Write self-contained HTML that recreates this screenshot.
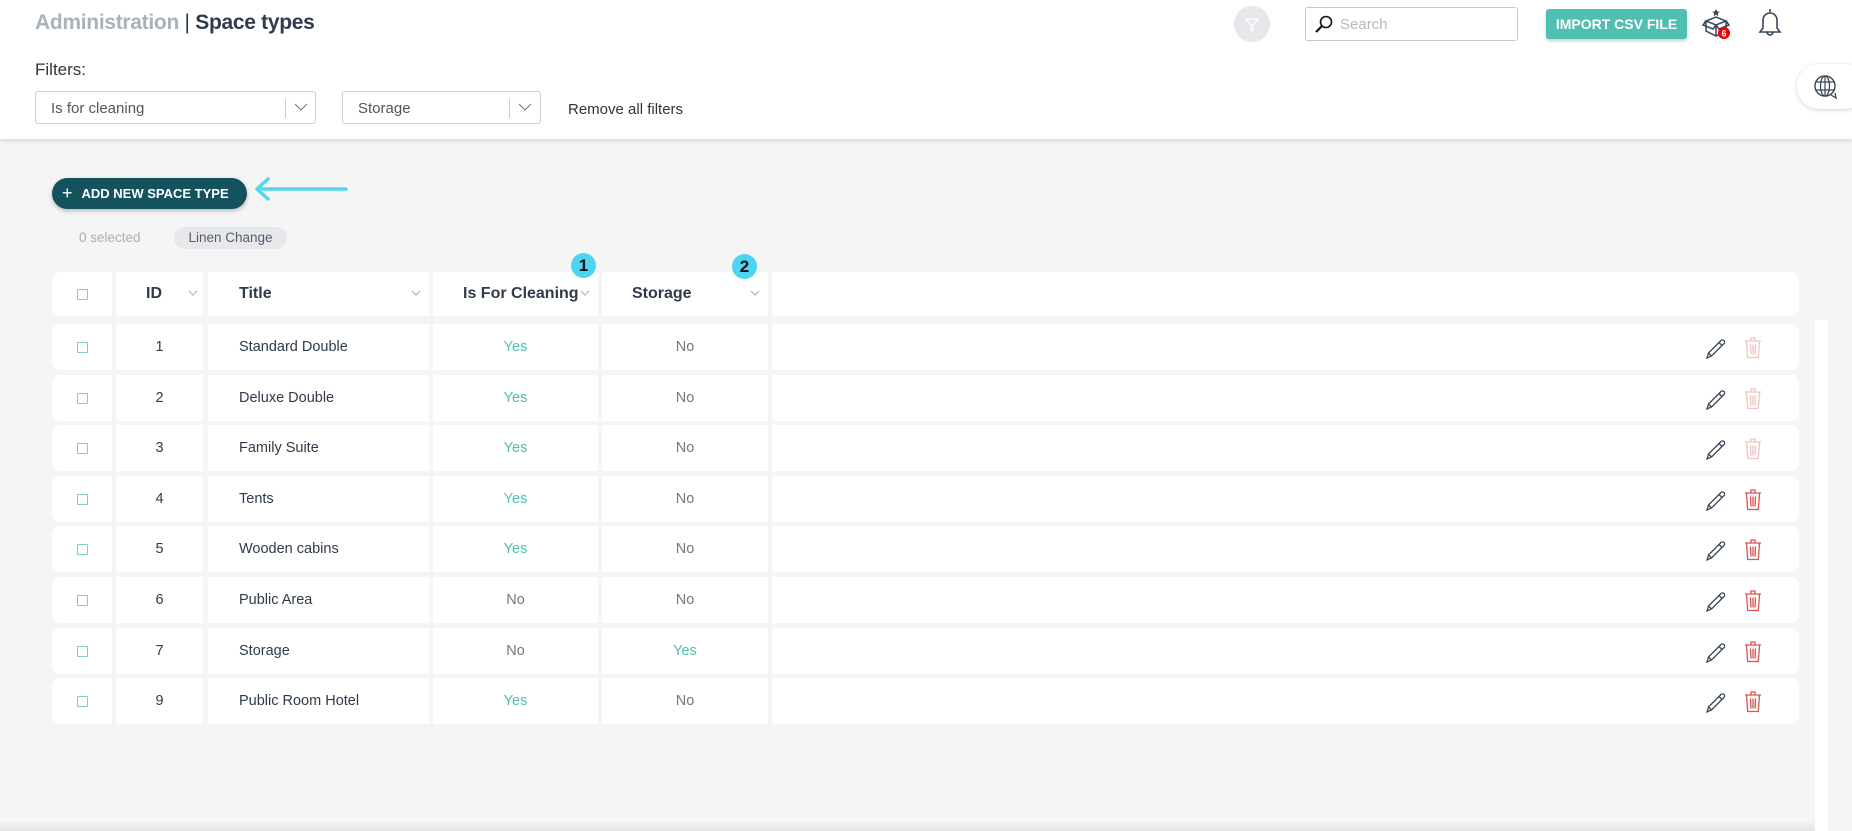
<!DOCTYPE html>
<html><head><meta charset="utf-8"><style>
*{box-sizing:border-box;margin:0;padding:0}
body{width:1852px;height:831px;overflow:hidden;background:#f5f5f5;font-family:"Liberation Sans",sans-serif;color:#2f3b4a;position:relative}
.abs{position:absolute}
.top{position:absolute;left:0;top:0;width:1852px;height:139px;background:#fff;box-shadow:0 2px 4px rgba(0,0,0,.12)}
.sel{position:absolute;height:33px;border:1px solid #cfcfcf;border-radius:3px;background:#fff;font-size:15px;color:#555;padding:8px 15px}
.sel .sep{position:absolute;top:7px;width:1px;height:19px;background:#ccc}
.sel svg{position:absolute;top:10px}
.cell{position:absolute;background:#fff;display:flex;align-items:center;justify-content:center;font-size:14.5px}
.cb{width:11px;height:11px;border:1.5px solid #7fcdc4;border-radius:1px}
.hd{font-weight:bold;font-size:16px;color:#2f3b4a}
.yes{color:#4fbfb0}.no{color:#777}
.chev{position:absolute;top:18px}
</style></head><body>
<div class="top"></div>
<div class="abs" style="left:35px;top:11px;font-size:21px;font-weight:bold;letter-spacing:-0.3px"><span style="color:#a9b1ba">Administration</span> <span style="font-weight:normal">|</span> <span style="color:#2f3b4a">Space types</span></div>
<div class="abs" style="left:35px;top:60px;font-size:17px;color:#333">Filters:</div>
<div class="sel" style="left:35px;top:91px;width:281px">Is for cleaning<div class="sep" style="left:249px"></div><svg style="left:258px" width="14" height="10"><path d="M1 2l6 6 6-6" stroke="#777" fill="none"/></svg></div>
<div class="sel" style="left:342px;top:91px;width:199px">Storage<div class="sep" style="left:166px"></div><svg style="left:175px" width="14" height="10"><path d="M1 2l6 6 6-6" stroke="#777" fill="none"/></svg></div>
<div class="abs" style="left:568px;top:101px;font-size:15px;color:#333">Remove all filters</div>
<div class="abs" style="left:1234px;top:6px;width:36px;height:36px;border-radius:50%;background:#e6e7ea"><svg width="36" height="36"><path d="M12 13h12l-5 6v6l-2-1v-5z" stroke="#fff" stroke-width="1.3" fill="none"/></svg></div>
<div class="abs" style="left:1305px;top:7px;width:213px;height:34px;border:1px solid #c8c8c8;border-radius:3px;background:#fff"><svg class="abs" style="left:8px;top:6px" width="20" height="20"><circle cx="12" cy="8" r="5.5" stroke="#111" stroke-width="1.6" fill="none"/><path d="M8 12l-6 6" stroke="#111" stroke-width="2.2"/></svg><span class="abs" style="left:34px;top:8px;font-size:15px;color:#b5b9c0">Search</span></div>
<div class="abs" style="left:1546px;top:9px;width:141px;height:30px;background:#4fbfb0;border-radius:3px;color:#fff;font-size:14px;font-weight:bold;display:flex;align-items:center;justify-content:center;box-shadow:0 2px 3px rgba(0,0,0,.2)">IMPORT CSV FILE</div>
<svg class="abs" style="left:1700px;top:4px" width="40" height="36"><path d="M16 5l1.2 2.5 2.6.3-2 1.7.6 2.6-2.4-1.4-2.4 1.4.6-2.6-2-1.7 2.6-.3z" fill="#3a4656"/><path d="M6 17l10-4 10 4-10 4zM6 17v10l10 5 10-5V17M16 21v11M6 17l-3 4 10 4 3-4M26 17l3 4-10 4-3-4" stroke="#3a4656" stroke-width="1.5" fill="none"/><circle cx="24" cy="29" r="6" fill="#e00"/><text x="24" y="32.5" font-size="9" font-weight="bold" fill="#fff" text-anchor="middle" font-family="Liberation Sans">6</text></svg>
<svg class="abs" style="left:1755px;top:6px" width="30" height="32"><path d="M15 3v3M8 22V14a7 7 0 0114 0v8l3 4H5z M12 26a3 3 0 006 0" stroke="#3a4656" stroke-width="1.6" fill="none"/></svg>
<div class="abs" style="left:1797px;top:64px;width:70px;height:45px;border-radius:22px;background:#fff;box-shadow:0 1px 4px rgba(0,0,0,.18)"><svg class="abs" style="left:15px;top:9px" width="28" height="28"><circle cx="13" cy="13" r="10" stroke="#3a4656" stroke-width="1.4" fill="none"/><ellipse cx="13" cy="13" rx="4.5" ry="10" stroke="#3a4656" stroke-width="1.2" fill="none"/><path d="M3 9h20M3 17h20M13 3v20" stroke="#3a4656" stroke-width="1.2"/><path d="M19 22l5 3-1-5" stroke="#3a4656" stroke-width="1.3" fill="#fff"/></svg></div>

<div class="abs" style="left:52px;top:178px;width:195px;height:31px;border-radius:16px;background:#14525e;color:#fff;font-size:13px;font-weight:bold;display:flex;align-items:center;padding-left:10px;box-shadow:0 2px 4px rgba(0,0,0,.25)"><span style="font-size:18px;font-weight:normal;margin-right:9px">+</span>ADD NEW SPACE TYPE</div>
<svg class="abs" style="left:252px;top:176px" width="96" height="26"><path d="M94 13H6M16 3L5 13l11 10" stroke="#55d6f0" stroke-width="3.5" fill="none" stroke-linecap="round" stroke-linejoin="round"/></svg>
<div class="abs" style="left:79px;top:230px;font-size:13.5px;color:#a8aeb5">0 selected</div>
<div class="abs" style="left:174px;top:227px;width:113px;height:22px;border-radius:11px;background:#e6e8eb;font-size:13.5px;color:#555e68;text-align:center;line-height:22px">Linen Change</div>

<div class="cell" style="left:52px;top:272px;width:60px;height:44px;border-radius:8px 0 0 8px"><div class="cb"></div></div>
<div class="cell hd" style="left:116px;top:272px;width:87px;height:44px;justify-content:flex-start;padding-left:30px">ID<svg class="chev" style="left:72px" width="10" height="7"><path d="M1 1l4 4 4-4" stroke="#aaa" fill="none"/></svg></div>
<div class="cell hd" style="left:208px;top:272px;width:221px;height:44px;justify-content:flex-start;padding-left:31px">Title<svg class="chev" style="left:203px" width="10" height="7"><path d="M1 1l4 4 4-4" stroke="#aaa" fill="none"/></svg></div>
<div class="cell hd" style="left:433px;top:272px;width:165px;height:44px;justify-content:flex-start;padding-left:30px">Is For Cleaning<svg class="chev" style="left:147px" width="10" height="7"><path d="M1 1l4 4 4-4" stroke="#aaa" fill="none"/></svg></div>
<div class="cell hd" style="left:602px;top:272px;width:166px;height:44px;justify-content:flex-start;padding-left:30px">Storage<svg class="chev" style="left:148px" width="10" height="7"><path d="M1 1l4 4 4-4" stroke="#aaa" fill="none"/></svg></div>
<div class="cell" style="left:772px;top:272px;width:1027px;height:44px;border-radius:0 8px 8px 0"></div>
<div class="abs" style="left:571px;top:253px;width:25px;height:25px;border-radius:50%;background:#4dd4f0;font-weight:bold;font-size:17px;text-align:center;line-height:25px;color:#111">1</div>
<div class="abs" style="left:732px;top:254px;width:25px;height:25px;border-radius:50%;background:#4dd4f0;font-weight:bold;font-size:17px;text-align:center;line-height:25px;color:#111">2</div>

<div class="abs" style="left:1815px;top:320px;width:13px;height:511px;background:#fff"></div>
<div class="abs" style="left:0;top:822px;width:1815px;height:9px;background:linear-gradient(#f3f3f3,#e4e4e4)"></div>

<div id="rows"></div>
<script>
var d=[[1,"Standard Double",1,0,0],[2,"Deluxe Double",1,0,0],[3,"Family Suite",1,0,0],[4,"Tents",1,0,1],[5,"Wooden cabins",1,0,1],[6,"Public Area",0,0,1],[7,"Storage",0,1,1],[9,"Public Room Hotel",1,0,1]];
var h="";
d.forEach(function(r,i){var t=Math.round(324+i*50.6),H=46;
function yn(v){return v?'<span class="yes">Yes</span>':'<span class="no">No</span>'}
var tc=r[4]?"#d9534f":"#f2c4bf";
h+='<div class="cell" style="left:52px;top:'+t+'px;width:60px;height:'+H+'px;border-radius:8px 0 0 8px"><div class="cb"></div></div>'+
'<div class="cell" style="left:116px;top:'+t+'px;width:87px;height:'+H+'px">'+r[0]+'</div>'+
'<div class="cell" style="left:208px;top:'+t+'px;width:221px;height:'+H+'px;justify-content:flex-start;padding-left:31px">'+r[1]+'</div>'+
'<div class="cell" style="left:433px;top:'+t+'px;width:165px;height:'+H+'px">'+yn(r[2])+'</div>'+
'<div class="cell" style="left:602px;top:'+t+'px;width:166px;height:'+H+'px">'+yn(r[3])+'</div>'+
'<div class="cell" style="left:772px;top:'+t+'px;width:1027px;height:'+H+'px;border-radius:0 8px 8px 0"></div>'+
'<svg class="abs" style="left:1704px;top:'+(t+12)+'px" width="24" height="24"><path d="M3 22l1.5-5L17 4.5a2 2 0 013 3L7.5 20z M15 6.5l3 3 M4.5 17l3 3" stroke="#3a4656" stroke-width="1.3" fill="none"/></svg>'+
'<svg class="abs" style="left:1742px;top:'+(t+11)+'px" width="22" height="25"><path d="M3 6h16M9 6V3h4v3M4.5 6.5l1.2 16h10.6l1.2-16M8.5 9.5l.5 10M11 9.5v10M13.5 9.5l-.5 10" stroke="'+tc+'" stroke-width="1.3" fill="none"/></svg>';});
document.getElementById("rows").innerHTML=h;
</script>
</body></html>
